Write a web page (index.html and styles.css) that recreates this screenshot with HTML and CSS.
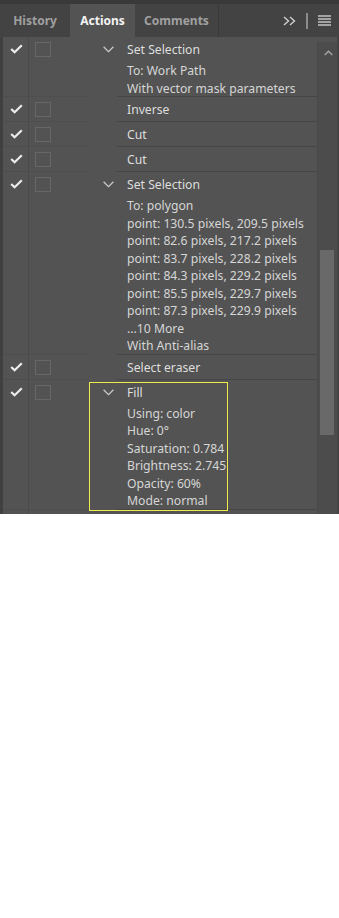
FILE: index.html
```html
<!DOCTYPE html>
<html>
<head>
<meta charset="utf-8">
<link rel="stylesheet" href="styles.css">
</head>
<body>
<div class="panel">
  <div class="tabbar">
    <div class="tab tab-history">History</div>
    <div class="tab tab-actions active">Actions</div>
    <div class="tab tab-comments">Comments</div>
    <div class="tools">
      <svg class="ico-more" width="13" height="10" viewBox="0 0 13 10"><path d="M1 1 L5.5 5 L1 9 M7 1 L11.5 5 L7 9" fill="none" stroke="#cfcfcf" stroke-width="1.4"/></svg>
      <span class="tool-sep"></span>
      <svg class="ico-menu" width="13" height="11" viewBox="0 0 13 11"><path d="M0 1 H13 M0 4 H13 M0 7 H13 M0 10 H13" fill="none" stroke="#c4c4c4" stroke-width="1.6"/></svg>
    </div>
  </div>
  <div class="body">
    <div class="list">

      <div class="grp">
        <div class="chk"><div class="cell"><svg width="13" height="10" viewBox="0 0 13 10"><path d="M1.2 5 L4.6 8.3 L11.8 1.2" fill="none" stroke="#ececec" stroke-width="2.2"/></svg></div></div>
        <div class="dlg"><span class="box"></span></div>
        <div class="twist"><div class="cell"><svg width="11" height="7" viewBox="0 0 11 7"><path d="M0.6 0.8 L5.5 5.6 L10.4 0.8" fill="none" stroke="#cdcdcd" stroke-width="1.2"/></svg></div></div>
        <div class="main">
          <div class="title">Set Selection</div>
          <div class="param">To: Work Path</div>
          <div class="param">With vector mask parameters</div>
        </div>
      </div>

      <div class="grp">
        <div class="chk"><div class="cell"><svg width="13" height="10" viewBox="0 0 13 10"><path d="M1.2 5 L4.6 8.3 L11.8 1.2" fill="none" stroke="#ececec" stroke-width="2.2"/></svg></div></div>
        <div class="dlg"><span class="box"></span></div>
        <div class="twist"></div>
        <div class="main">
          <div class="title">Inverse</div>
        </div>
      </div>

      <div class="grp">
        <div class="chk"><div class="cell"><svg width="13" height="10" viewBox="0 0 13 10"><path d="M1.2 5 L4.6 8.3 L11.8 1.2" fill="none" stroke="#ececec" stroke-width="2.2"/></svg></div></div>
        <div class="dlg"><span class="box"></span></div>
        <div class="twist"></div>
        <div class="main">
          <div class="title">Cut</div>
        </div>
      </div>

      <div class="grp">
        <div class="chk"><div class="cell"><svg width="13" height="10" viewBox="0 0 13 10"><path d="M1.2 5 L4.6 8.3 L11.8 1.2" fill="none" stroke="#ececec" stroke-width="2.2"/></svg></div></div>
        <div class="dlg"><span class="box"></span></div>
        <div class="twist"></div>
        <div class="main">
          <div class="title">Cut</div>
        </div>
      </div>

      <div class="grp">
        <div class="chk"><div class="cell"><svg width="13" height="10" viewBox="0 0 13 10"><path d="M1.2 5 L4.6 8.3 L11.8 1.2" fill="none" stroke="#ececec" stroke-width="2.2"/></svg></div></div>
        <div class="dlg"><span class="box"></span></div>
        <div class="twist"><div class="cell"><svg width="11" height="7" viewBox="0 0 11 7"><path d="M0.6 0.8 L5.5 5.6 L10.4 0.8" fill="none" stroke="#cdcdcd" stroke-width="1.2"/></svg></div></div>
        <div class="main">
          <div class="title">Set Selection</div>
          <div class="param">To: polygon</div>
          <div class="param">point: 130.5 pixels, 209.5 pixels</div>
          <div class="param">point: 82.6 pixels, 217.2 pixels</div>
          <div class="param">point: 83.7 pixels, 228.2 pixels</div>
          <div class="param">point: 84.3 pixels, 229.2 pixels</div>
          <div class="param">point: 85.5 pixels, 229.7 pixels</div>
          <div class="param">point: 87.3 pixels, 229.9 pixels</div>
          <div class="param">...10 More</div>
          <div class="param">With Anti-alias</div>
        </div>
      </div>

      <div class="grp">
        <div class="chk"><div class="cell"><svg width="13" height="10" viewBox="0 0 13 10"><path d="M1.2 5 L4.6 8.3 L11.8 1.2" fill="none" stroke="#ececec" stroke-width="2.2"/></svg></div></div>
        <div class="dlg"><span class="box"></span></div>
        <div class="twist"></div>
        <div class="main">
          <div class="title">Select eraser</div>
        </div>
      </div>

      <div class="grp sel">
        <div class="chk"><div class="cell"><svg width="13" height="10" viewBox="0 0 13 10"><path d="M1.2 5 L4.6 8.3 L11.8 1.2" fill="none" stroke="#ececec" stroke-width="2.2"/></svg></div></div>
        <div class="dlg"><span class="box"></span></div>
        <div class="twist"><div class="cell"><svg width="11" height="7" viewBox="0 0 11 7"><path d="M0.6 0.8 L5.5 5.6 L10.4 0.8" fill="none" stroke="#cdcdcd" stroke-width="1.2"/></svg></div></div>
        <div class="main">
          <div class="title">Fill</div>
          <div class="param">Using: color</div>
          <div class="param">Hue: 0°</div>
          <div class="param">Saturation: 0.784</div>
          <div class="param">Brightness: 2.745</div>
          <div class="param">Opacity: 60%</div>
          <div class="param">Mode: normal</div>
        </div>
        <div class="sel-frame"></div>
      </div>

      <div class="grp">
        <div class="chk"><div class="cell"></div></div>
        <div class="dlg"></div>
        <div class="twist"></div>
        <div class="main">
          <div class="title">&nbsp;</div>
        </div>
      </div>

    </div>
    <div class="scroll">
      <div class="scroll-up"><svg width="9" height="6" viewBox="0 0 9 6"><path d="M0.7 5 L4.5 1.2 L8.3 5" fill="none" stroke="#a8a8a8" stroke-width="1.3"/></svg></div>
      <div class="thumb"></div>
    </div>
  </div>
</div>
</body>
</html>
```

FILE: styles.css
```css
html, body {
  margin: 0;
  padding: 0;
  background: #ffffff;
}

.panel {
  width: 339px;
  height: 514px;
  background: #535353;
  display: flex;
  flex-direction: column;
  overflow: hidden;
  font-family: "Noto Sans", "Open Sans", sans-serif;
  font-size: 12.2px;
  color: #dadada;
}

.tabbar {
  flex: none;
  height: 33px;
  border-top: 4px solid #393939;
  background: #434343;
  display: flex;
  align-items: stretch;
}

.tab {
  display: flex;
  align-items: center;
  justify-content: center;
  font-weight: 700;
  font-size: 12px;
  color: #a0a0a0;
}

.tab-history {
  width: 70px;
}

.tab-actions {
  width: 65px;
}

.tab.active {
  background: #535353;
  color: #f4f4f4;
}

.tab-comments {
  width: 83px;
  border-right: 1px solid #3a3a3a;
}

.tools {
  flex: 1;
  display: flex;
  align-items: center;
  justify-content: flex-end;
  padding-right: 8px;
}

.ico-more {
  display: block;
  margin-top: 1px;
}

.tool-sep {
  display: block;
  width: 2px;
  height: 16px;
  background: #8c8c8c;
  margin: 0 10px 0 10px;
}

.ico-menu {
  display: block;
}

.body {
  flex: 1;
  display: flex;
  border-left: 3px solid #404040;
  border-right: 2px solid #434343;
  min-height: 0;
}

.list {
  flex: 1;
  overflow: hidden;
}

.grp {
  display: flex;
  position: relative;
}

.chk {
  width: 25px;
  flex: none;
  border-right: 1px solid #4a4a4a;
  border-bottom: 1px solid #4d4d4d;
}

.cell {
  height: 24px;
  display: flex;
  align-items: center;
}

.chk .cell {
  padding-left: 7px;
}

.chk svg,
.twist svg {
  display: block;
}

.dlg {
  width: 60px;
  flex: none;
  border-bottom: 1px solid #4f4f4f;
}

.box {
  display: block;
  width: 14px;
  height: 13px;
  margin: 5px 0 0 6px;
  border: 1px solid #676767;
}

.twist {
  width: 28px;
  flex: none;
}

.twist .cell {
  padding-left: 14px;
  padding-top: 1px;
  height: 23px;
}

.main {
  flex: 1;
  padding-left: 10px;
  border-bottom: 1px solid #464646;
}

.title {
  height: 24px;
  line-height: 25px;
  color: #dedede;
  white-space: nowrap;
}

.param {
  height: 17.5px;
  line-height: 19px;
  color: #d6d6d6;
  white-space: nowrap;
}

.sel-frame {
  position: absolute;
  left: 86px;
  top: 2px;
  bottom: -1px;
  width: 137px;
  border: 1px solid #f0ea4c;
  pointer-events: none;
}

.scroll {
  width: 19px;
  flex: none;
  margin-top: 5px;
  background: #4c4c4c;
  border-left: 1px solid #484848;
  display: flex;
  flex-direction: column;
}

.scroll-up {
  height: 22px;
  display: flex;
  align-items: center;
  justify-content: center;
  margin-left: 1px;
}

.scroll-up svg {
  display: block;
}

.thumb {
  margin: 186px 0 0 2px;
  width: 14px;
  height: 185px;
  background: #696969;
  border-radius: 1px;
}
```
